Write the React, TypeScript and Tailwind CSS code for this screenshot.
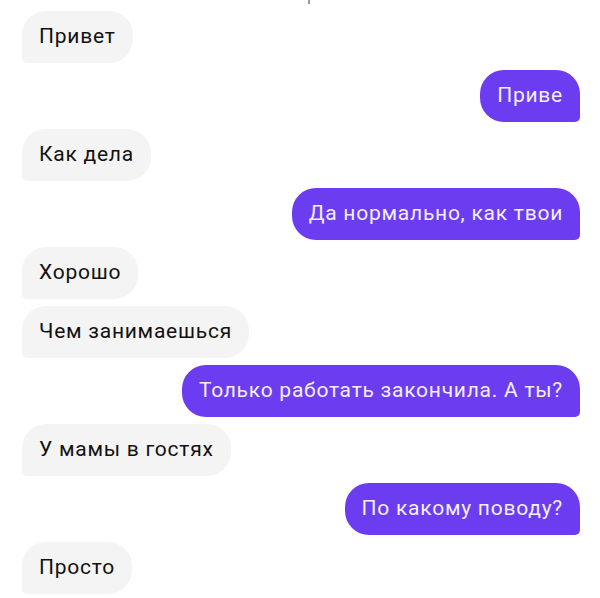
import React from "react";

type Msg = { text: string; out: boolean };

const messages: Msg[] = [
  { text: "Привет", out: false },
  { text: "Приве", out: true },
  { text: "Как дела", out: false },
  { text: "Да нормально, как твои", out: true },
  { text: "Хорошо", out: false },
  { text: "Чем занимаешься", out: false },
  { text: "Только работать закончила. А ты?", out: true },
  { text: "У мамы в гостях", out: false },
  { text: "По какому поводу?", out: true },
  { text: "Просто", out: false },
];

function Bubble({ text, out }: Msg) {
  if (out) {
    return (
      <div className="flex justify-end">
        <div className="h-[52px] flex items-center rounded-[24px] rounded-br-[5px] bg-[#6c3cf1] px-[17px] text-[21px] tracking-[0.75px] text-[#f3efff]">
          {text}
        </div>
      </div>
    );
  }
  return (
    <div className="flex justify-start">
      <div className="h-[52px] flex items-center rounded-[24px] rounded-bl-[5px] bg-[#f4f4f4] px-[17px] text-[21px] tracking-[0.75px] text-[#111]">
        {text}
      </div>
    </div>
  );
}

export default function App() {
  return (
    <div
      className="relative w-[600px] h-[598px] overflow-hidden bg-white"
      style={{ fontFamily: "Roboto, 'Liberation Sans', sans-serif" }}
    >
      <div className="absolute left-[308px] top-0 h-[4px] w-[2px] bg-[#999]" />
      <div className="flex flex-col gap-[7px] pt-[11px] pl-[22px] pr-[20px]">
        {messages.map((m, i) => (
          <Bubble key={i} {...m} />
        ))}
      </div>
    </div>
  );
}
